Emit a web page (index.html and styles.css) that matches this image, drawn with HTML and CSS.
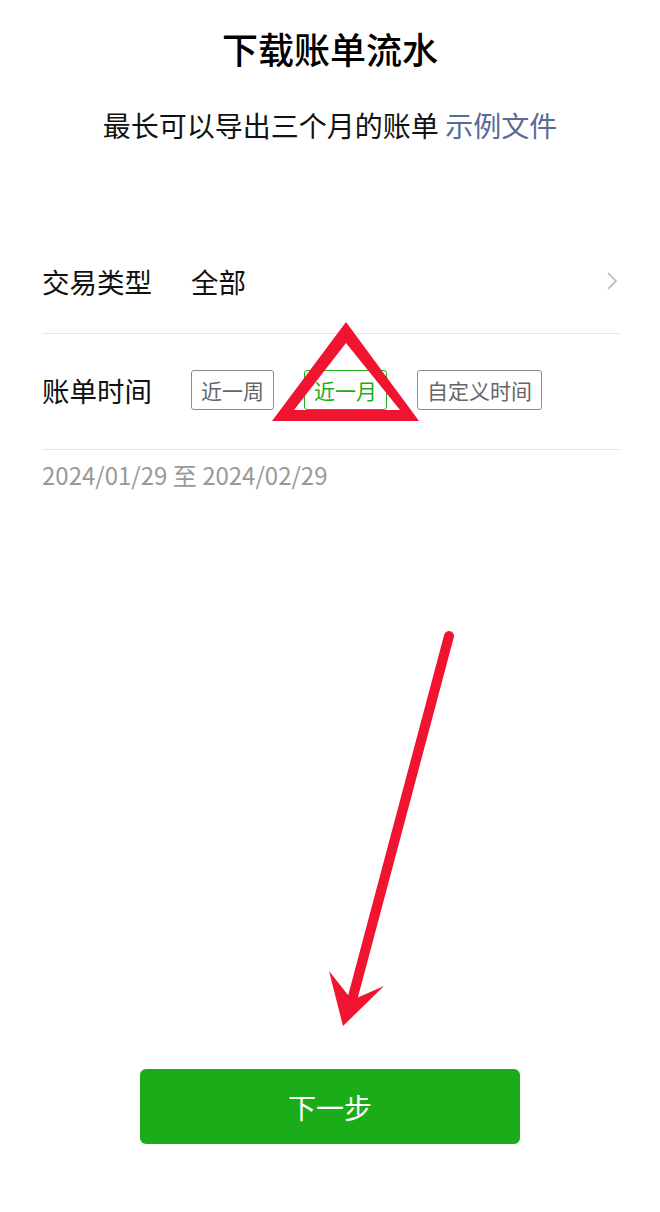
FILE: index.html
```html
<!DOCTYPE html>
<html lang="zh-CN">
<head>
    <meta charset="UTF-8">
    <meta name="viewport" content="width=device-width, initial-scale=1.0">
    <title>下载账单流水</title>
    <link rel="stylesheet" href="styles.css">
</head>
<body>

<div class="page">
    <div class="header">
        <h1 class="title">下载账单流水</h1>
        <p class="subtitle">最长可以导出三个月的账单 <a class="link" href="#">示例文件</a></p>
    </div>

    <div class="form">
        <div class="row">
            <span class="label">交易类型</span>
            <span class="value">全部</span>
            <svg class="chevron" width="12" height="20" viewBox="0 0 12 20">
                <path d="M2 2 L10 10 L2 18" fill="none" stroke="#c4c4c4" stroke-width="2"/>
            </svg>
        </div>
        <div class="row row-time">
            <span class="label">账单时间</span>
            <div class="options">
                <button class="option">近一周</button>
                <button class="option active">近一月</button>
                <button class="option">自定义时间</button>
            </div>
        </div>
        <div class="range">2024/01/29 至 2024/02/29</div>
    </div>

    <div class="footer">
        <button class="next">下一步</button>
    </div>

    <!-- red annotation marks drawn over the screenshot -->
    <svg class="marks" width="660" height="1212" viewBox="0 0 660 1212">
        <path fill="#f01430" fill-rule="evenodd"
              d="M346 322 L419 421 L272 421 Z M346 343 L294 410 L400 410 Z"/>
        <line x1="449" y1="636" x2="351" y2="1004" stroke="#f01430" stroke-width="10" stroke-linecap="round"/>
        <path fill="#f01430" d="M343 1026 L329 971 L352 1000 L384 986 Z"/>
    </svg>
</div>

</body>
</html>
```

FILE: styles.css
```css
body {
    margin: 0;
    background-color: #ffffff;
    font-family: "Noto Sans CJK SC", "Noto Sans", sans-serif;
    color: #111111;
}
.page {
    position: relative;
    width: 660px;
    height: 1212px;
    overflow: hidden;
}
.header {
    padding-top: 23px;
    text-align: center;
}
.title {
    margin: 0;
    font-size: 36px;
    font-weight: 500;
    line-height: 50px;
    color: #000000;
}
.subtitle {
    margin: 32px 0 0;
    font-size: 28px;
    line-height: 40px;
}
.link {
    color: #576b95;
    text-decoration: none;
}
.form {
    margin-top: 84px;
    padding: 0 40px 0 42px;
}
.row {
    display: flex;
    align-items: center;
    height: 104px;
    border-bottom: 1px solid #e6e6e6;
    font-size: 27.5px;
}
.label {
    width: 149px;
}
.value {
    flex: 1;
}
.chevron {
    margin-right: 2px;
}
.row-time {
    height: 116px;
    padding-bottom: 4px;
    box-sizing: border-box;
}
.options {
    display: flex;
    gap: 30px;
}
.option {
    height: 40px;
    padding: 0 9px;
    border: 1px solid #8c8c8c;
    border-radius: 3px;
    background: #ffffff;
    color: #666666;
    font-family: inherit;
    font-size: 21px;
    line-height: 38px;
}
.option.active {
    border-color: #1aad19;
    color: #1aad19;
}
.range {
    height: 50px;
    line-height: 50px;
    font-size: 24px;
    color: #999999;
}
.footer {
    display: flex;
    justify-content: center;
    margin-top: 569px;
}
.next {
    width: 380px;
    height: 75px;
    border: none;
    border-radius: 6px;
    background-color: #1aad19;
    color: #ffffff;
    font-family: inherit;
    font-size: 28px;
}
.marks {
    position: absolute;
    left: 0;
    top: 0;
    pointer-events: none;
}
```
